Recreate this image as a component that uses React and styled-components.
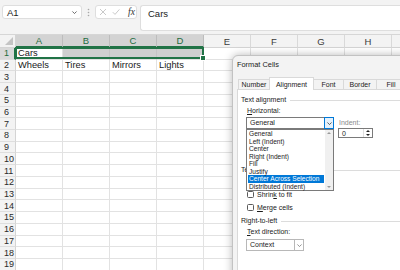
import React from 'react';
import styled, { createGlobalStyle } from 'styled-components';

const GlobalStyle = createGlobalStyle`
  html, body { margin: 0; padding: 0; background: #fff; }
  body {
    width: 400px;
    height: 270px;
    overflow: hidden;
    font-family: "Liberation Sans", Arial, sans-serif;
  }
`;

const Screen = styled.div`
  position: relative;
  width: 400px;
  height: 270px;
  overflow: hidden;
  background: #fff;
`;

/* ---------- formula bar ---------- */

const FormulaBar = styled.div`
  display: flex;
  align-items: flex-start;
  height: 35px;
  box-sizing: border-box;
  padding: 5px 0 0 2px;
  background: #f3f3f3;
  border-bottom: 1px solid #d6d6d6;
`;

const NameBox = styled.div`
  display: flex;
  align-items: center;
  justify-content: space-between;
  width: 80px;
  height: 14px;
  box-sizing: border-box;
  padding: 0 3px 0 4px;
  background: #fff;
  border: 1px solid #dedede;
  border-radius: 3px;
  font-size: 9.5px;
  color: #222;
`;

const Grip = styled.div`
  width: 13px;
  height: 14px;
  display: flex;
  align-items: center;
  justify-content: center;
`;

const FxBox = styled.div`
  display: flex;
  align-items: center;
  width: 42px;
  height: 14px;
  box-sizing: border-box;
  padding-left: 3px;
  gap: 5px;
  background: #fff;
  border: 1px solid #dedede;
  border-radius: 3px;
`;

const FxLabel = styled.span`
  margin-left: 3px;
  font-family: "Liberation Serif", "Times New Roman", serif;
  font-style: italic;
  font-size: 9.5px;
  color: #333;
`;

const FormulaInput = styled.div`
  flex: 1;
  margin-left: 3px;
  height: 26px;
  box-sizing: border-box;
  padding: 2px 0 0 7px;
  background: #fff;
  border: 1px solid #dedede;
  border-right: none;
  border-radius: 3px 0 0 3px;
  font-size: 9.5px;
  line-height: 11px;
  color: #222;
`;

/* ---------- sheet ---------- */

const Sheet = styled.div`
  display: grid;
  grid-template-columns: 16px repeat(9, 47px);
  grid-template-rows: 13px repeat(19, 11.72px);
  font-size: 9.3px;
  color: #1a1a1a;
`;

const Corner = styled.div`
  position: relative;
  background: #f3f3f3;
  border-right: 1px solid #d4d4d4;
  border-bottom: 1px solid #d4d4d4;
  box-sizing: border-box;
  &::after {
    content: "";
    position: absolute;
    right: 2px;
    bottom: 2px;
    border-left: 8px solid transparent;
    border-bottom: 8px solid #c4c4c4;
  }
`;

const ColHeader = styled.div`
  display: flex;
  align-items: center;
  justify-content: center;
  box-sizing: border-box;
  background: ${(p) => (p.$selected ? '#d3d3d3' : '#f3f3f3')};
  color: ${(p) => (p.$selected ? '#1e6c3d' : '#3a3a3a')};
  border-right: 1px solid ${(p) => (p.$selected ? '#bdbdbd' : '#d9d9d9')};
  border-bottom: ${(p) => (p.$selected ? '2px solid #217346' : '1px solid #d4d4d4')};
  font-size: 9.5px;
`;

const RowHeader = styled.div`
  display: flex;
  align-items: center;
  padding-left: 4px;
  box-sizing: border-box;
  background: ${(p) => (p.$selected ? '#d9d9d9' : '#f3f3f3')};
  color: ${(p) => (p.$selected ? '#1e6c3d' : '#2a2a2a')};
  border-right: ${(p) => (p.$selected ? '2px solid #217346' : '1px solid #d4d4d4')};
  border-bottom: 1px solid #dedede;
  font-size: 9px;
`;

const Cell = styled.div`
  position: relative;
  display: flex;
  align-items: center;
  padding-left: 2px;
  box-sizing: border-box;
  white-space: nowrap;
  background: ${(p) => (p.$shaded ? '#cfcfcf' : '#fff')};
  border-right: 1px solid ${(p) => (p.$shaded ? '#c4c4c4' : '#e2e2e2')};
  border-bottom: 1px solid #e2e2e2;
`;

const Selection = styled.div`
  position: absolute;
  left: -1px;
  top: -1px;
  width: 189px;
  height: calc(100% + 1px);
  border: 2px solid #217346;
  box-sizing: border-box;
  pointer-events: none;
  z-index: 2;
  &::after {
    content: "";
    position: absolute;
    right: -4px;
    bottom: -4px;
    width: 4px;
    height: 4px;
    background: #217346;
    border: 1px solid #fff;
  }
`;

/* ---------- dialog ---------- */

const Dialog = styled.div`
  position: absolute;
  left: 232px;
  top: 55px;
  width: 190px;
  height: 230px;
  background: #f3f3f3;
  border: 1px solid #c2c2c2;
  border-radius: 6px 0 0 0;
  box-shadow: 0 0 9px rgba(0, 0, 0, 0.28);
  font-family: "Liberation Sans", Arial, sans-serif;
  font-size: 7px;
  color: #1b1b1b;
  z-index: 5;
`;

const DialogTitle = styled.div`
  height: 21px;
  box-sizing: border-box;
  padding: 4px 0 0 4px;
  font-size: 7.4px;
  line-height: 10px;
`;

const TabStrip = styled.div`
  display: flex;
  align-items: flex-end;
  height: 12px;
  margin-left: 6px;
`;

const Tab = styled.div`
  width: ${(p) => p.$w}px;
  height: ${(p) => (p.$active ? 13 : 10)}px;
  box-sizing: border-box;
  display: flex;
  align-items: center;
  justify-content: center;
  background: ${(p) => (p.$active ? '#fff' : '#f3f3f3')};
  border: 1px solid #d9d9d9;
  border-bottom: none;
  margin-left: -1px;
  margin-bottom: ${(p) => (p.$active ? '-1px' : '0')};
  position: relative;
  z-index: ${(p) => (p.$active ? 2 : 1)};
`;

const Panel = styled.div`
  margin-left: 4px;
  height: 200px;
  background: #fff;
  border: 1px solid #d9d9d9;
  border-right: none;
  display: flex;
  flex-direction: column;
  padding-left: 3px;
`;

const GroupHeader = styled.div`
  display: flex;
  align-items: center;
  margin-top: ${(p) => p.$mt}px;
  height: 10px;
  line-height: 10px;
  &::after {
    content: "";
    flex: 1;
    margin-left: 4px;
    border-top: 1px solid #dcdcdc;
  }
`;

const FieldLabel = styled.div`
  margin-left: ${(p) => (p.$inset ? 1 : 6)}px;
  margin-top: ${(p) => p.$mt || 0}px;
  height: 10px;
  line-height: 10px;
  color: ${(p) => (p.$dim ? '#8a8a8a' : '#1b1b1b')};
`;

const FieldRow = styled.div`
  display: flex;
  align-items: flex-start;
  margin-left: 5px;
`;

const FieldCol = styled.div`
  position: relative;
  display: flex;
  flex-direction: column;
  margin-top: ${(p) => p.$mt || 0}px;
  margin-left: ${(p) => p.$ml || 0}px;
`;

const Select = styled.div`
  position: relative;
  display: flex;
  align-items: center;
  width: ${(p) => p.$w}px;
  height: 12px;
  margin-top: ${(p) => p.$mt || 0}px;
  box-sizing: border-box;
  padding-left: 3px;
  background: #fff;
  border: 1px solid ${(p) => (p.$focused ? '#7a7a7a' : '#b8b8b8')};
  line-height: 10px;
`;

const SelectButton = styled.div`
  position: absolute;
  right: -1px;
  top: -1px;
  width: 10px;
  height: 12px;
  box-sizing: border-box;
  display: flex;
  align-items: center;
  justify-content: center;
  background: ${(p) => (p.$focused ? '#e5f1fb' : '#fff')};
  border: 1px solid ${(p) => (p.$focused ? '#0078d7' : '#b8b8b8')};
`;

const OptionList = styled.div`
  position: absolute;
  left: 0;
  top: 23px;
  width: 88px;
  height: 62px;
  box-sizing: border-box;
  padding: 0 9px 0 1px;
  background: #fff;
  border: 1px solid #7a7a7a;
  z-index: 3;
`;

const Option = styled.div`
  height: 7.5px;
  line-height: 7.5px;
  padding-left: 1px;
  font-size: 6.6px;
  white-space: nowrap;
  background: ${(p) => (p.$active ? '#0078d7' : 'transparent')};
  color: ${(p) => (p.$active ? '#fff' : '#1b1b1b')};
`;

const ScrollTrack = styled.div`
  position: absolute;
  right: 0;
  top: 0;
  bottom: 0;
  width: 8px;
  background: #f0f0f0;
  display: flex;
  flex-direction: column;
  justify-content: space-between;
  align-items: center;
  padding: 2px 0;
  box-sizing: border-box;
`;

const Spinner = styled.div`
  position: relative;
  display: flex;
  align-items: center;
  width: 35px;
  height: 10px;
  box-sizing: border-box;
  padding-left: 3px;
  background: #fff;
  border: 1px solid #7a7a7a;
`;

const SpinButtons = styled.div`
  position: absolute;
  right: 0;
  top: 0;
  bottom: 0;
  width: 8px;
  display: flex;
  flex-direction: column;
  justify-content: space-around;
  align-items: center;
  border-left: 1px solid #e0e0e0;
`;

const CheckRow = styled.label`
  display: flex;
  align-items: center;
  gap: 3px;
  margin-left: 6px;
  margin-top: ${(p) => p.$mt}px;
  height: 10px;
`;

const Box = styled.span`
  width: 7px;
  height: 7px;
  box-sizing: border-box;
  border: 1px solid #5a5a5a;
  border-radius: 1.5px;
  background: #fff;
`;

const Tri = styled.span`
  width: 0;
  height: 0;
  border-left: 2px solid transparent;
  border-right: 2px solid transparent;
  ${(p) =>
    p.$up
      ? `border-bottom: 2px solid ${p.$color || '#222'};`
      : `border-top: 2px solid ${p.$color || '#222'};`}
`;

/* ---------- icons ---------- */

const Chevron = ({ color = '#555', size = 7 }) => (
  <svg width={size} height={size} viewBox="0 0 10 10">
    <polyline points="2,3.5 5,6.5 8,3.5" fill="none" stroke={color} strokeWidth="1.1" />
  </svg>
);

const Dots = () => (
  <svg width="3" height="9" viewBox="0 0 3 9">
    <circle cx="1.5" cy="1.5" r="0.8" fill="#a8a8a8" />
    <circle cx="1.5" cy="4.5" r="0.8" fill="#a8a8a8" />
    <circle cx="1.5" cy="7.5" r="0.8" fill="#a8a8a8" />
  </svg>
);

const Cross = () => (
  <svg width="8" height="8" viewBox="0 0 8 8">
    <path d="M1 1 L7 7 M7 1 L1 7" stroke="#c3c3c3" strokeWidth="0.9" />
  </svg>
);

const Check = () => (
  <svg width="8" height="8" viewBox="0 0 8 8">
    <path d="M0.8 4.2 L3 6.4 L7.4 1.4" fill="none" stroke="#c3c3c3" strokeWidth="0.9" />
  </svg>
);

// column I only shows its left edge, so it gets no letter
const columns = ['A', 'B', 'C', 'D', 'E', 'F', 'G', 'H', ''];
const rowTwo = ['Wheels', 'Tires', 'Mirrors', 'Lights'];
const tabs = [
  ['Number', 32],
  ['Alignment', 45],
  ['Font', 31],
  ['Border', 34],
  ['Fill', 30],
];
const options = [
  'General',
  'Left (Indent)',
  'Center',
  'Right (Indent)',
  'Fill',
  'Justify',
  'Center Across Selection',
  'Distributed (Indent)',
];

export default function App() {
  const rows = Array.from({ length: 19 }, (_, i) => i + 1);

  return (
    <Screen>
      <GlobalStyle />
      <FormulaBar>
        <NameBox>
          A1
          <Chevron color="#444" />
        </NameBox>
        <Grip>
          <Dots />
        </Grip>
        <FxBox>
          <Cross />
          <Check />
          <FxLabel>fx</FxLabel>
        </FxBox>
        <FormulaInput>Cars</FormulaInput>
      </FormulaBar>

      <Sheet>
        <Corner />
        {columns.map((c, i) => (
          <ColHeader key={i} $selected={i < 4}>
            {c}
          </ColHeader>
        ))}
        {rows.map((r) => (
          <React.Fragment key={r}>
            <RowHeader $selected={r === 1}>{r}</RowHeader>
            {columns.map((c, i) => {
              if (r === 1) {
                return (
                  <Cell key={i} $shaded={i > 0 && i < 4}>
                    {i === 0 && 'Cars'}
                    {i === 0 && <Selection />}
                  </Cell>
                );
              }
              return <Cell key={i}>{r === 2 ? rowTwo[i] : null}</Cell>;
            })}
          </React.Fragment>
        ))}
      </Sheet>

      <Dialog>
        <DialogTitle>Format Cells</DialogTitle>
        <TabStrip>
          {tabs.map(([t, w]) => (
            <Tab key={t} $w={w} $active={t === 'Alignment'}>
              {t}
            </Tab>
          ))}
        </TabStrip>
        <Panel>
          <GroupHeader $mt={5}>Text alignment</GroupHeader>
          <FieldRow>
            <FieldCol $mt={1}>
              <FieldLabel $inset>
                <u>H</u>orizontal:
              </FieldLabel>
              <Select $w={88} $mt={1} $focused>
                General
                <SelectButton $focused>
                  <Chevron color="#333" />
                </SelectButton>
              </Select>
              <OptionList>
                {options.map((o) => (
                  <Option key={o} $active={o === 'Center Across Selection'}>
                    {o}
                  </Option>
                ))}
                <ScrollTrack>
                  <Tri $up $color="#9a9a9a" />
                  <Tri $color="#9a9a9a" />
                </ScrollTrack>
              </OptionList>
            </FieldCol>
            <FieldCol $mt={13} $ml={4}>
              <FieldLabel $dim $inset>
                Indent:
              </FieldLabel>
              <Spinner>
                0
                <SpinButtons>
                  <Tri $up />
                  <Tri />
                </SpinButtons>
              </Spinner>
            </FieldCol>
          </FieldRow>
          <GroupHeader $mt={27}>Text control</GroupHeader>
          <CheckRow $mt={14}>
            <Box />
            <span>
              Shrin<u>k</u> to fit
            </span>
          </CheckRow>
          <CheckRow $mt={3}>
            <Box />
            <span>
              <u>M</u>erge cells
            </span>
          </CheckRow>
          <GroupHeader $mt={4}>Right-to-left</GroupHeader>
          <FieldLabel $mt={1}>
            <u>T</u>ext direction:
          </FieldLabel>
          <FieldRow>
            <Select $w={58} $mt={2}>
              Context
              <SelectButton>
                <Chevron color="#777" />
              </SelectButton>
            </Select>
          </FieldRow>
        </Panel>
      </Dialog>
    </Screen>
  );
}
